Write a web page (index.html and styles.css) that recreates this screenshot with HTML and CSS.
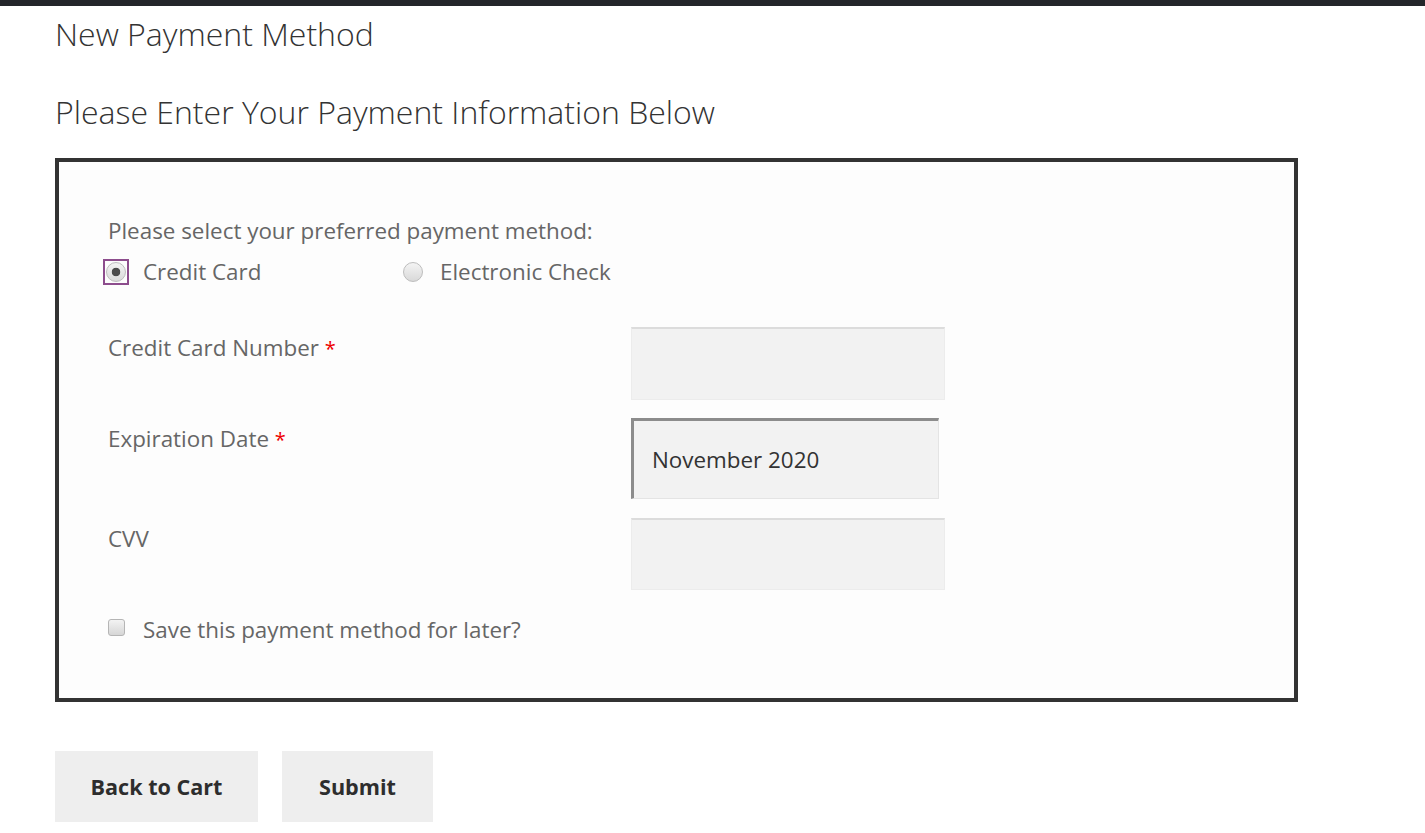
FILE: index.html
```html
<!DOCTYPE html>
<html lang="en">
<head>
<meta charset="utf-8">
<title>New Payment Method</title>
<link rel="stylesheet" href="styles.css">
</head>
<body>
<div class="topbar"></div>
<main class="page">
  <h1 class="title">New Payment Method</h1>
  <h2 class="subtitle">Please Enter Your Payment Information Below</h2>
  <form class="panel">
    <p class="prompt">Please select your preferred payment method:</p>
    <div class="methods">
      <label class="method">
        <span class="focus-ring"><input class="radio" type="radio" name="method" checked></span>
        <span>Credit Card</span>
      </label>
      <label class="method">
        <span class="focus-ring plain"><input class="radio" type="radio" name="method"></span>
        <span>Electronic Check</span>
      </label>
    </div>
    <div class="field first">
      <label class="field-label">Credit Card Number <span class="req">*</span></label>
      <input class="text-input" type="text">
    </div>
    <div class="field">
      <label class="field-label">Expiration Date <span class="req">*</span></label>
      <div class="select-input">November 2020</div>
    </div>
    <div class="field">
      <label class="field-label">CVV</label>
      <input class="text-input cvv" type="text">
    </div>
    <label class="save">
      <input class="checkbox" type="checkbox">
      <span>Save this payment method for later?</span>
    </label>
  </form>
  <div class="actions">
    <button class="btn back" type="button">Back to Cart</button>
    <button class="btn submit" type="button">Submit</button>
  </div>
</main>
</body>
</html>
```
FILE: styles.css
```css
* { box-sizing: border-box; }
body {
  margin: 0;
  background: #fff;
  font-family: "Open Sans", "Noto Sans", sans-serif;
  color: #333;
}
.topbar {
  height: 6px;
  background: #23262a;
}
.page {
  padding-left: 55px;
}
.title, .subtitle {
  margin: 0;
  font-weight: 300;
  font-size: 32px;
  line-height: 40px;
  color: #333;
}
.title { margin-top: 8px; }
.subtitle { margin-top: 38px; }

.panel {
  margin-top: 26px;
  width: 1243px;
  border: 4px solid #333;
  background: #fdfdfd;
  padding: 54px 49px 53px;
  font-size: 22.4px;
  line-height: 30px;
  color: #666;
}
.prompt {
  margin: 0;
}
.methods {
  margin-top: 11px;
  margin-left: -2px;
  display: flex;
}
.method {
  width: 297px;
  display: flex;
  align-items: center;
  gap: 17px;
  height: 30px;
}
.focus-ring {
  display: flex;
  width: 20px;
  height: 20px;
  margin-top: -1px;
  outline: 2px solid #8d4d8d;
  outline-offset: 1.5px;
}
.focus-ring.plain { outline: none; }
.radio {
  appearance: none;
  -webkit-appearance: none;
  margin: 0;
  width: 20px;
  height: 20px;
  border-radius: 50%;
  border: 1px solid #bdbdbd;
  background: linear-gradient(#f4f4f4, #d9d9d9);
}
.radio:checked {
  background: radial-gradient(circle, #4a4a4a 0 4px, transparent 4.6px), linear-gradient(#f4f4f4, #d9d9d9);
}

.field {
  display: grid;
  grid-template-columns: 523px auto;
  align-items: start;
}
.field.first { margin-top: 40px; }
.field + .field { margin-top: 18px; }
.field + .field + .field { margin-top: 19px; }
.field-label {
  padding-top: 6px;
}
.req {
  color: #e00;
  font-size: 20px;
}
.text-input {
  width: 314px;
  height: 73px;
  margin: 0;
  background: #f2f2f2;
  border: 1px solid #ececec;
  border-top: 2px solid #dcdcdc;
  font: inherit;
}
.text-input.cvv { height: 72px; }
.select-input {
  width: 308px;
  height: 81px;
  background: #f2f2f2;
  border-top: 3px solid #8c8c8c;
  border-left: 3px solid #8c8c8c;
  border-right: 1px solid #e4e4e4;
  border-bottom: 1px solid #e4e4e4;
  padding: 24px 0 0 18px;
  color: #333;
  line-height: 30px;
}
.save {
  margin-top: 25px;
  display: flex;
  align-items: flex-start;
  gap: 18px;
}
.checkbox {
  appearance: none;
  -webkit-appearance: none;
  margin: 4px 0 0;
  width: 17px;
  height: 17px;
  border-radius: 3px;
  border: 1px solid #b5b5b5;
  background: linear-gradient(#f3f3f3, #d6d6d6);
}

.actions {
  margin-top: 49px;
  display: flex;
  gap: 24px;
}
.btn {
  height: 71px;
  padding: 0;
  border: none;
  background: #eee;
  font-family: "Open Sans", "Noto Sans", sans-serif;
  font-weight: 700;
  font-size: 21.6px;
  color: #2d2d2d;
}
.btn.back { width: 203px; }
.btn.submit { width: 151px; }
```
